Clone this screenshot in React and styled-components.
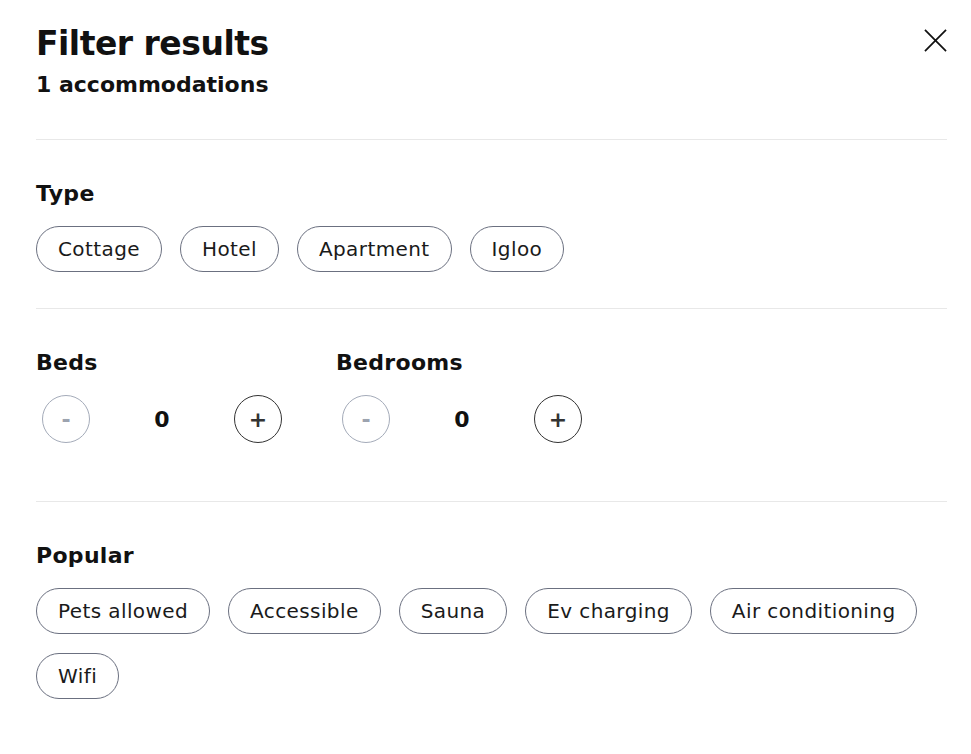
import React, { useState } from 'react'
import styled, { createGlobalStyle } from 'styled-components'

const GlobalStyle = createGlobalStyle`
  body {
    margin: 0;
    background: #ffffff;
    font-family: "DejaVu Sans", "Noto Sans", sans-serif;
    color: #111111;
  }
`

const Panel = styled.div`
  width: 971px;
  box-sizing: border-box;
  padding: 22px 24px 40px 36px;
`

const Header = styled.div`
  display: flex;
  justify-content: space-between;
  align-items: flex-start;
  padding-bottom: 40px;
  border-bottom: 1px solid #e8e8e8;
`

const Title = styled.h1`
  margin: 0;
  font-size: 33px;
  line-height: 44px;
  font-weight: 700;
  letter-spacing: -0.5px;
`

const Count = styled.div`
  margin-top: 5px;
  font-size: 22px;
  line-height: 28px;
  font-weight: 700;
`

const CloseButton = styled.button`
  border: none;
  background: none;
  padding: 0;
  margin-top: 7px;
  cursor: pointer;
  display: flex;
`

const Section = styled.section`
  padding: 40px 0 36px;
  border-bottom: ${p => (p.last ? 'none' : '1px solid #e8e8e8')};
`

const Heading = styled.h2`
  margin: 0 0 18px;
  font-size: 22px;
  line-height: 28px;
  font-weight: 700;
  letter-spacing: 0.3px;
`

const Pills = styled.div`
  display: flex;
  flex-wrap: wrap;
  gap: 19px 18px;
`

const Pill = styled.button`
  height: 46px;
  padding: 0 21px;
  border-radius: 23px;
  border: 1px solid ${p => (p.active ? '#111111' : '#6b7080')};
  background: ${p => (p.active ? '#111111' : '#ffffff')};
  color: ${p => (p.active ? '#ffffff' : '#1a1a1a')};
  font-family: inherit;
  font-size: 20px;
  letter-spacing: 0.4px;
  cursor: pointer;
`

const CounterGrid = styled.div`
  display: flex;
  gap: 48px;
  padding-bottom: 22px;
`

const CounterBlock = styled.div`
  width: 252px;
`

const CounterRow = styled.div`
  display: flex;
  align-items: center;
  justify-content: space-between;
  padding: 0 6px;
`

const RoundButton = styled.button`
  width: 48px;
  height: 48px;
  border-radius: 50%;
  border: 1px solid ${p => (p.disabled ? '#a4abb9' : '#333333')};
  background: #ffffff;
  color: ${p => (p.disabled ? '#9ca3af' : '#333333')};
  font-family: inherit;
  font-size: 22px;
  font-weight: 700;
  display: flex;
  align-items: center;
  justify-content: center;
  padding: 0;
  cursor: ${p => (p.disabled ? 'default' : 'pointer')};
`

const Value = styled.span`
  font-size: 22px;
  font-weight: 700;
`

const types = ['Cottage', 'Hotel', 'Apartment', 'Igloo']
const popular = ['Pets allowed', 'Accessible', 'Sauna', 'Ev charging', 'Air conditioning', 'Wifi']

function Counter ({ label, value, onChange }) {
  return (
    <CounterBlock>
      <Heading>{label}</Heading>
      <CounterRow>
        <RoundButton disabled={value === 0} onClick={() => onChange(Math.max(0, value - 1))}>-</RoundButton>
        <Value>{value}</Value>
        <RoundButton onClick={() => onChange(value + 1)}>+</RoundButton>
      </CounterRow>
    </CounterBlock>
  )
}

export default function App () {
  const [beds, setBeds] = useState(0)
  const [bedrooms, setBedrooms] = useState(0)
  const [selected, setSelected] = useState([])

  const toggle = name =>
    setSelected(s => (s.includes(name) ? s.filter(x => x !== name) : [...s, name]))

  return (
    <Panel>
      <GlobalStyle />
      <Header>
        <div>
          <Title>Filter results</Title>
          <Count>1 accommodations</Count>
        </div>
        <CloseButton aria-label="Close">
          <svg width="23" height="23" viewBox="0 0 24 24" fill="none" stroke="#111" strokeWidth="1.8">
            <path d="M1 1L23 23M23 1L1 23" />
          </svg>
        </CloseButton>
      </Header>

      <Section>
        <Heading>Type</Heading>
        <Pills>
          {types.map(t => (
            <Pill key={t} active={selected.includes(t)} onClick={() => toggle(t)}>{t}</Pill>
          ))}
        </Pills>
      </Section>

      <Section>
        <CounterGrid>
          <Counter label="Beds" value={beds} onChange={setBeds} />
          <Counter label="Bedrooms" value={bedrooms} onChange={setBedrooms} />
        </CounterGrid>
      </Section>

      <Section last>
        <Heading>Popular</Heading>
        <Pills>
          {popular.map(t => (
            <Pill key={t} active={selected.includes(t)} onClick={() => toggle(t)}>{t}</Pill>
          ))}
        </Pills>
      </Section>
    </Panel>
  )
}
